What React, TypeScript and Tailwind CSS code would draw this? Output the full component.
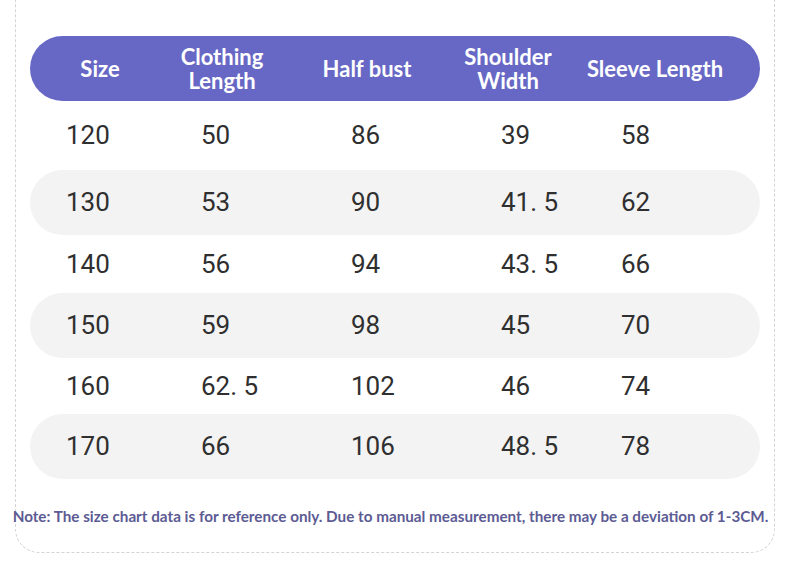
const rows: string[][] = [
  ["120", "50", "86", "39", "58"],
  ["130", "53", "90", "41. 5", "62"],
  ["140", "56", "94", "43. 5", "66"],
  ["150", "59", "98", "45", "70"],
  ["160", "62. 5", "102", "46", "74"],
  ["170", "66", "106", "48. 5", "78"]
];

const rowHeights = ["h-[69px]", "h-[65px]", "h-[58px]", "h-[65px]", "h-[56px]", "h-[65px]"];

function HeaderCell({ width, lines }: { width: string; lines: string[] }) {
  return (
    <div className={`${width} flex flex-col items-center justify-center text-center leading-[24px]`}>
      {lines.map((line) => (
        <span key={line} className="whitespace-nowrap">
          {line}
        </span>
      ))}
    </div>
  );
}

export default function App() {
  return (
    <main className="h-[582px] w-[790px] overflow-hidden bg-white">
      <div className="mx-[15px] -mt-[30px] h-[583px] rounded-[24px] border border-dashed border-[#d4d4d4] px-[14px] pt-[65px]">
        <div className="flex h-[65px] items-center rounded-full bg-[#6768c5] font-['Lato','Liberation_Sans',sans-serif] text-[22px] font-bold text-white">
          <HeaderCell width="w-[140px]" lines={["Size"]} />
          <HeaderCell width="w-[104px]" lines={["Clothing", "Length"]} />
          <HeaderCell width="w-[186px]" lines={["Half bust"]} />
          <HeaderCell width="w-[96px]" lines={["Shoulder", "Width"]} />
          <HeaderCell width="w-[198px]" lines={["Sleeve Length"]} />
        </div>

        <div className="font-['Roboto','Noto_Sans',sans-serif] text-[26px] text-[#2f2f2f]">
          {rows.map((row, index) => (
            <div
              key={row[0]}
              className={`flex items-center rounded-full ${rowHeights[index]} ${index % 2 === 1 ? "bg-[#f3f3f3]" : ""}`}
            >
              <span className="w-[171px] shrink-0 pl-[36px]">{row[0]}</span>
              <span className="w-[150px] shrink-0 whitespace-pre">{row[1]}</span>
              <span className="w-[150px] shrink-0">{row[2]}</span>
              <span className="w-[120px] shrink-0 whitespace-pre">{row[3]}</span>
              <span>{row[4]}</span>
            </div>
          ))}
        </div>

        <p className="-ml-[20px] -mr-[11px] mt-[26px] whitespace-nowrap text-center font-['Lato','Liberation_Sans',sans-serif] text-[15.25px] leading-[22px] font-bold text-[#5c5b94]">
          Note: The size chart data is for reference only. Due to manual measurement, there may be a deviation of 1-3CM.
        </p>
      </div>
    </main>
  );
}
